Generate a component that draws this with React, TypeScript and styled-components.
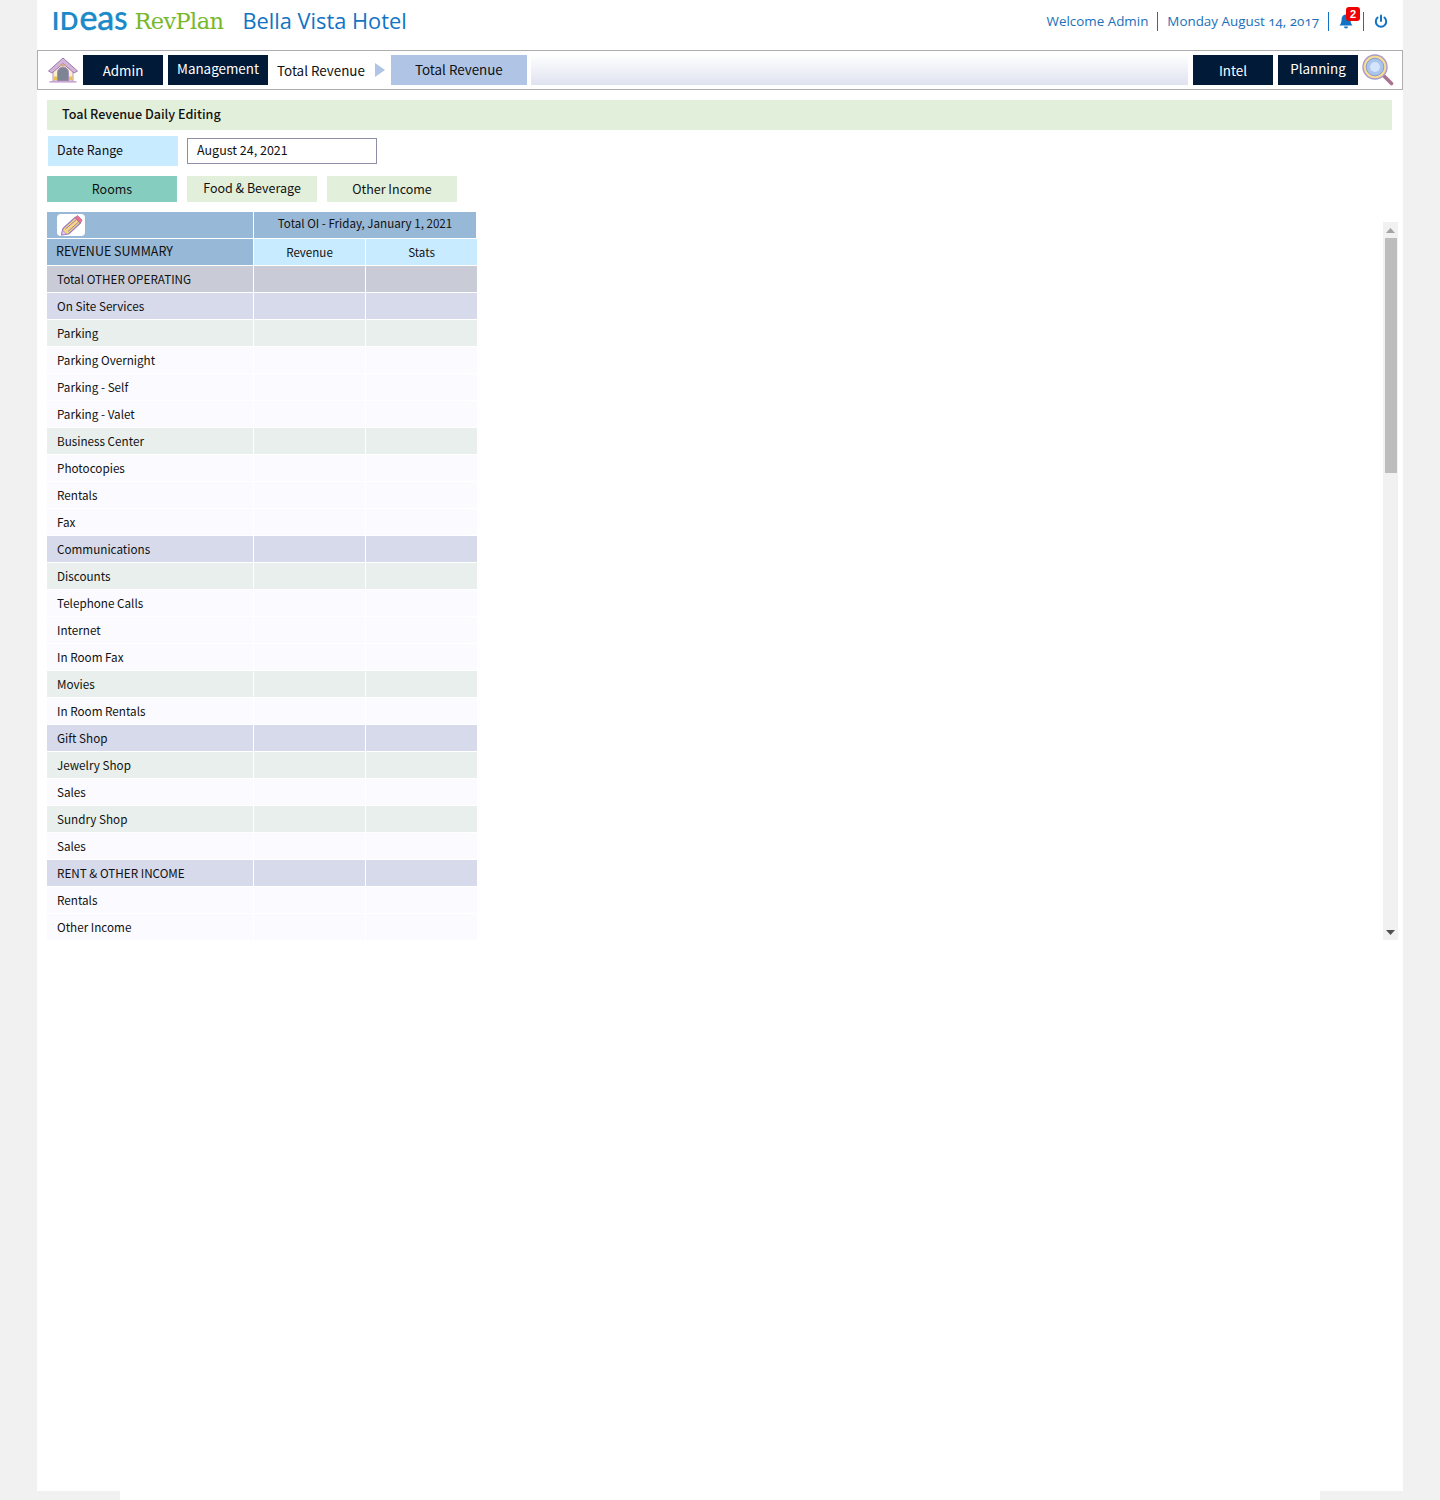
import React from 'react';
import styled, { createGlobalStyle } from 'styled-components';

const Global = createGlobalStyle`
  html, body { margin: 0; padding: 0; background: #f1f1f1; }
  body { font-family: "Noto Sans CJK SC", "Noto Sans", sans-serif; color: #111; }
`;

const Shell = styled.div`
  width: 1366px;
  height: 1491px;
  margin: 0 auto;
  background: #fff;
  display: flex;
  flex-direction: column;
`;

const FooterStrip = styled.div`
  width: 1200px;
  height: 9px;
  margin: 0 auto;
  background: #fff;
`;

const Header = styled.header`
  height: 50px;
  box-sizing: border-box;
  display: flex;
  align-items: center;
  padding: 0 5px 8px 15px;
`;

const LogoMark = styled.div`
  margin-bottom: 4px;
  font-family: "Lato", sans-serif;
  font-size: 24px;
  line-height: 36px;
  font-weight: 700;
  letter-spacing: 1px;
  white-space: nowrap;
  color: #1b8ac9;
`;

const LogoLower = styled.span`
  font-size: 34px;
  line-height: 36px;
  font-weight: 400;
  letter-spacing: 0;
  -webkit-text-stroke: 0.6px #1b8ac9;
`;

const LogoProduct = styled.span`
  font-family: "DejaVu Serif", serif;
  font-size: 22.5px;
  line-height: 30px;
  letter-spacing: -0.6px;
  color: #77b82a;
  margin-left: 6px;
`;

const HotelName = styled.span`
  font-family: "Open Sans", sans-serif;
  font-size: 21.8px;
  line-height: 30px;
  color: #1273c4;
  margin-left: 19px;
`;

const HeaderRight = styled.div`
  margin-left: auto;
  display: flex;
  align-items: center;
  font-family: "Open Sans", sans-serif;
  font-size: 13.4px;
  line-height: 20px;
  font-variant-numeric: oldstyle-nums;
  color: #1a6fb8;
`;

const HeaderItem = styled.span<{ $divided?: boolean; $icon?: boolean }>`
  display: flex;
  align-items: center;
  height: 19px;
  padding: 0 ${(p) => (p.$icon ? '10px' : '9px')};
  border-right: ${(p) => (p.$divided ? '1px solid #1273c4' : 'none')};
`;

const BellWrap = styled.span`
  position: relative;
  display: flex;
  width: 14px;
  height: 16px;
  color: #1273c4;
`;

const Badge = styled.span`
  position: absolute;
  top: -6px;
  left: 7px;
  width: 14px;
  height: 14px;
  border-radius: 3px;
  background: #f00000;
  color: #fff;
  font-family: "Liberation Sans", sans-serif;
  font-size: 11px;
  font-weight: 700;
  line-height: 14px;
  text-align: center;
`;

const Nav = styled.nav`
  height: 40px;
  box-sizing: border-box;
  border: 1px solid #aeaeae;
  display: flex;
  align-items: center;
  padding: 0 8px 0 10px;
`;

const NavIcon = styled.svg`
  flex: none;
  display: block;
`;

const NavButton = styled.div<{ $w: number; $lift?: boolean }>`
  flex: none;
  width: ${(p) => p.$w}px;
  height: 30px;
  margin-left: 5px;
  background: #011a38;
  color: #fff;
  font-size: 13.4px;
  line-height: ${(p) => (p.$lift ? 27 : 31)}px;
  text-align: center;
`;

const NavCrumb = styled.span`
  margin-left: 9px;
  font-size: 13.4px;
  line-height: 32px;
  color: #111;
`;

const NavArrow = styled.span`
  width: 0;
  height: 0;
  margin-left: 10px;
  border-left: 10px solid #b0c4e6;
  border-top: 7.5px solid transparent;
  border-bottom: 7.5px solid transparent;
`;

const NavActive = styled.div`
  flex: none;
  width: 136px;
  height: 30px;
  margin-left: 6px;
  background: #b0c5e6;
  font-size: 13.4px;
  line-height: 29px;
  text-align: center;
`;

const NavFill = styled.div`
  flex: 1;
  height: 30px;
  margin-left: 4px;
  background: linear-gradient(#ffffff, #dfe2f0);
`;

const Content = styled.main`
  padding: 10px 11px 0 10px;
  display: flex;
  flex-direction: column;
`;

const TitleBar = styled.div`
  height: 30px;
  padding-left: 15px;
  background: #e2efda;
  font-size: 12.6px;
  font-weight: 500;
  line-height: 28px;
  color: #111;
`;

const FilterRow = styled.div`
  display: flex;
  align-items: center;
  margin-top: 6px;
  padding-left: 1px;
`;

const FilterLabel = styled.div`
  width: 130px;
  height: 30px;
  box-sizing: border-box;
  padding-left: 9px;
  background: #c9ebff;
  font-size: 12.5px;
  line-height: 28px;
`;

const DateInput = styled.div`
  width: 190px;
  height: 26px;
  box-sizing: border-box;
  margin-left: 9px;
  padding-left: 9px;
  border: 1px solid #8f8fa8;
  font-size: 12.5px;
  line-height: 22px;
`;

const Tabs = styled.div`
  display: flex;
  gap: 10px;
  margin-top: 10px;
`;

const Tab = styled.div<{ $active?: boolean; $lift?: boolean }>`
  width: 130px;
  height: 26px;
  background: ${(p) => (p.$active ? '#85cebf' : '#e2efda')};
  font-size: 12.5px;
  line-height: ${(p) => (p.$lift ? 24 : 26)}px;
  text-align: center;
`;

const TableArea = styled.div`
  display: flex;
  margin-top: 10px;
  height: 728px;
`;

const Table = styled.div`
  width: 430px;
  display: grid;
  grid-template-columns: 206px 111px 111px;
  grid-auto-rows: 26px;
  column-gap: 1px;
  row-gap: 1px;
  align-content: start;
`;

const HeadCell = styled.div<{ $span?: boolean; $pad?: number }>`
  ${(p) => (p.$span ? 'grid-column: span 2; margin-right: 1px;' : '')}
  background: #97b8d6;
  font-size: ${(p) => (p.$span ? 11.6 : 12.5)}px;
  line-height: ${(p) => (p.$span ? 23 : 24)}px;
  padding-left: ${(p) => p.$pad ?? 0}px;
  text-align: ${(p) => (p.$span ? 'center' : 'left')};
`;

const EditCell = styled.div`
  background: #97b8d6;
  padding-left: 10px;
  display: flex;
  align-items: center;
`;

const ColHead = styled.div`
  background: #c9ebff;
  font-size: 11.6px;
  line-height: 27px;
  text-align: center;
`;

type Tone = 'total' | 'section' | 'group' | 'item';

const toneBg: Record<Tone, string> = {
  total: '#c9ccd6',
  section: '#d6daeb',
  group: '#e8efec',
  item: '#fafaff',
};

const RowLabel = styled.div<{ $tone: Tone }>`
  background: ${(p) => toneBg[p.$tone]};
  font-size: 11.7px;
  line-height: 25px;
  padding-left: 10px;
  white-space: nowrap;
`;

const RowValue = styled.div<{ $tone: Tone }>`
  background: ${(p) => toneBg[p.$tone]};
`;

const EditButton = styled.span`
  display: flex;
  align-items: center;
  justify-content: center;
  width: 28px;
  height: 22px;
  border-radius: 4px;
  background: #fff;
`;

const ScrollTrack = styled.div`
  width: 15px;
  height: 718px;
  margin: 10px 0 0 auto;
  margin-right: -6px;
  background: #f1f1f1;
  display: flex;
  flex-direction: column;
  align-items: center;
`;

const ScrollEnd = styled.div`
  height: 16px;
  flex: none;
  display: flex;
  align-items: center;
  justify-content: center;
`;

const ScrollThumb = styled.div`
  width: 12px;
  height: 235px;
  background: #bdbdbd;
`;

const ScrollGap = styled.div`
  flex: 1;
`;

const rows: [string, Tone][] = [
  ['Total OTHER OPERATING', 'total'],
  ['On Site Services', 'section'],
  ['Parking', 'group'],
  ['Parking Overnight', 'item'],
  ['Parking - Self', 'item'],
  ['Parking - Valet', 'item'],
  ['Business Center', 'group'],
  ['Photocopies', 'item'],
  ['Rentals', 'item'],
  ['Fax', 'item'],
  ['Communications', 'section'],
  ['Discounts', 'group'],
  ['Telephone Calls', 'item'],
  ['Internet', 'item'],
  ['In Room Fax', 'item'],
  ['Movies', 'group'],
  ['In Room Rentals', 'item'],
  ['Gift Shop', 'section'],
  ['Jewelry Shop', 'group'],
  ['Sales', 'item'],
  ['Sundry Shop', 'group'],
  ['Sales', 'item'],
  ['RENT & OTHER INCOME', 'section'],
  ['Rentals', 'item'],
  ['Other Income', 'item'],
];

const HomeIcon = () => (
  <NavIcon width="30" height="26" viewBox="0 0 30 26">
    <path d="M5 14 L15 5 L25 14 V24 H5 Z" fill="#fdeecb" stroke="#b795c4" strokeWidth="1" />
    <path d="M15 1 L29.5 14 L26 16 L15 6.5 L4 16 L.5 14 Z" fill="#d4b4d8" stroke="#9b7bb0" strokeWidth="1" strokeLinejoin="round" />
    <path d="M9.5 24 V15.5 a5.5 5.5 0 0 1 11 0 V24 Z" fill="#7d8494" stroke="#a98cbd" strokeWidth="1" />
    <rect x="12" y="7.5" width="6" height="1.6" fill="#c9a97c" />
    <rect x="5.5" y="19.5" width="3.5" height="3.5" fill="#e8c24f" />
    <rect x="21" y="19.5" width="3.5" height="3.5" fill="#e8c24f" />
    <rect x="1.5" y="24" width="27" height="1.6" fill="#c7a3d0" />
  </NavIcon>
);

const SearchIcon = () => (
  <NavIcon width="32" height="32" viewBox="0 0 32 32" style={{ marginLeft: 4 }}>
    <path d="M21 21 L29.5 29.5" stroke="#a8738e" strokeWidth="3.6" strokeLinecap="round" />
    <circle cx="13" cy="13" r="12" fill="#f7dc93" stroke="#a99ac8" strokeWidth="1.4" />
    <circle cx="13" cy="13" r="8.8" fill="#a9c5ec" stroke="#8f9cd0" strokeWidth="1" />
    <circle cx="13" cy="13" r="5" fill="#d5e4fa" />
  </NavIcon>
);

const PencilIcon = () => (
  <svg width="24" height="21" viewBox="0 0 24 21">
    <path d="M2.5 20 L4 13.5 L16 2.5 L21.5 8 L9.5 19 Z" fill="#f6d67e" stroke="#9a7cbc" strokeWidth="1.2" strokeLinejoin="round" />
    <path d="M6.5 14 L17.5 4.5 M9 16.5 L19.5 7" stroke="#9a7cbc" strokeWidth="1" />
    <path d="M16 2.5 L18.5 .6 L23 5 L21.5 8 Z" fill="#ef6f92" stroke="#b9708f" strokeWidth="0.8" />
    <path d="M2.5 20 L3.6 15.2 L7.6 19 Z" fill="#e2c8e6" stroke="#9a7cbc" strokeWidth="0.6" />
  </svg>
);

const BellIcon = () => (
  <svg width="14" height="16" viewBox="0 0 14 16" fill="currentColor">
    <path d="M7 1.5 a4.4 4.4 0 0 1 4.4 4.4 c0 3.6 .9 5 2.2 6.6 H.4 C1.7 10.9 2.6 9.5 2.6 5.9 A4.4 4.4 0 0 1 7 1.5 Z" />
    <path d="M5 13.6 h4 a2 2 0 0 1 -4 0 Z" />
  </svg>
);

const PowerIcon = () => (
  <svg width="14" height="15" viewBox="0 0 14 15" fill="none" stroke="#1273c4" strokeWidth="2" strokeLinecap="round">
    <path d="M7 1.5 V7" />
    <path d="M3.6 3.6 a5.2 5.2 0 1 0 6.8 0" />
  </svg>
);

const ArrowUp = () => (
  <svg width="9" height="5" viewBox="0 0 9 5"><path d="M4.5 0 L9 5 H0 Z" fill="#a3a3a3" /></svg>
);

const ArrowDown = () => (
  <svg width="9" height="5" viewBox="0 0 9 5"><path d="M0 0 H9 L4.5 5 Z" fill="#505050" /></svg>
);

export default function App() {
  return (
    <>
      <Global />
      <Shell>
        <Header>
          <LogoMark>
            ID<LogoLower>ea</LogoLower>S
          </LogoMark>
          <LogoProduct>RevPlan</LogoProduct>
          <HotelName>Bella Vista Hotel</HotelName>
          <HeaderRight>
            <HeaderItem $divided>Welcome Admin</HeaderItem>
            <HeaderItem $divided>Monday August 14, 2017</HeaderItem>
            <HeaderItem $divided $icon>
              <BellWrap>
                <BellIcon />
                <Badge>2</Badge>
              </BellWrap>
            </HeaderItem>
            <HeaderItem $icon>
              <PowerIcon />
            </HeaderItem>
          </HeaderRight>
        </Header>
        <Nav>
          <HomeIcon />
          <NavButton $w={80}>Admin</NavButton>
          <NavButton $w={100} $lift>Management</NavButton>
          <NavCrumb>Total Revenue</NavCrumb>
          <NavArrow />
          <NavActive>Total Revenue</NavActive>
          <NavFill />
          <NavButton $w={80}>Intel</NavButton>
          <NavButton $w={80} $lift>Planning</NavButton>
          <SearchIcon />
        </Nav>
        <Content>
          <TitleBar>Toal Revenue Daily Editing</TitleBar>
          <FilterRow>
            <FilterLabel>Date Range</FilterLabel>
            <DateInput>August 24, 2021</DateInput>
          </FilterRow>
          <Tabs>
            <Tab $active>Rooms</Tab>
            <Tab $lift>Food &amp; Beverage</Tab>
            <Tab>Other Income</Tab>
          </Tabs>
          <TableArea>
            <Table>
              <EditCell>
                <EditButton>
                  <PencilIcon />
                </EditButton>
              </EditCell>
              <HeadCell $span>Total OI - Friday, January 1, 2021</HeadCell>
              <HeadCell $pad={9}>REVENUE SUMMARY</HeadCell>
              <ColHead>Revenue</ColHead>
              <ColHead>Stats</ColHead>
              {rows.map(([label, tone], i) => (
                <React.Fragment key={i}>
                  <RowLabel $tone={tone}>{label}</RowLabel>
                  <RowValue $tone={tone} />
                  <RowValue $tone={tone} />
                </React.Fragment>
              ))}
            </Table>
            <ScrollTrack>
              <ScrollEnd>
                <ArrowUp />
              </ScrollEnd>
              <ScrollThumb />
              <ScrollGap />
              <ScrollEnd>
                <ArrowDown />
              </ScrollEnd>
            </ScrollTrack>
          </TableArea>
        </Content>
      </Shell>
      <FooterStrip />
    </>
  );
}
